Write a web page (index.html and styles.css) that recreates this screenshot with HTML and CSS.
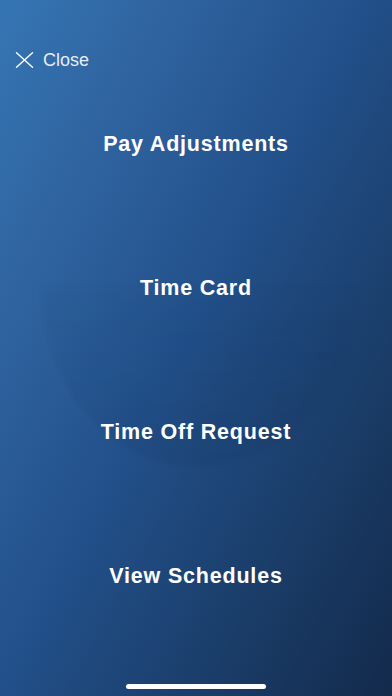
FILE: index.html
```html
<!DOCTYPE html>
<html lang="en">
<head>
<meta charset="utf-8">
<title>Menu</title>
<link rel="stylesheet" href="styles.css">
</head>
<body>
<div class="screen">
  <div class="watermark"></div>
  <header class="topbar">
    <button class="close-btn" type="button">
      <svg class="close-icon" width="19" height="16" viewBox="0 0 19 16" aria-hidden="true">
        <path d="M1.5 0.8 L17.5 15.2 M17.5 0.8 L1.5 15.2" stroke="#ffffff" stroke-width="1.4" fill="none" stroke-linecap="round"/>
      </svg>
      <span class="close-label">Close</span>
    </button>
  </header>
  <nav class="menu">
    <a class="menu-item">Pay Adjustments</a>
    <a class="menu-item">Time Card</a>
    <a class="menu-item">Time Off Request</a>
    <a class="menu-item">View Schedules</a>
  </nav>
  <div class="home-bar"><span class="home-indicator"></span></div>
</div>
</body>
</html>
```
FILE: styles.css
```css
* { box-sizing: border-box; }
html, body { margin: 0; padding: 0; }
body {
  font-family: "Liberation Sans", Arial, sans-serif;
  background: #1d416f;
}
.screen {
  position: relative;
  width: 392px;
  height: 696px;
  overflow: hidden;
  background: linear-gradient(118deg, #3675b4 0%, #2c5e99 30%, #22508a 48%, #1b3f6c 72%, #132a4b 100%);
  display: flex;
  flex-direction: column;
}
.watermark {
  position: absolute;
  left: 38px;
  top: 286px;
  width: 318px;
  height: 182px;
  border-radius: 0 0 50% 50% / 0 0 100% 100%;
  background: linear-gradient(180deg, rgba(12, 34, 68, 0.02) 0%, rgba(12, 34, 68, 0.09) 100%);
  box-shadow: -2px 1px 3px rgba(255, 255, 255, 0.04);
  filter: blur(3px);
}
.topbar {
  position: relative;
  height: 72px;
  padding: 48px 0 0 15px;
}
.close-btn {
  display: flex;
  align-items: center;
  gap: 9px;
  height: 24px;
  padding: 0;
  border: 0;
  background: none;
  color: #ffffff;
  cursor: pointer;
}
.close-icon { display: block; }
.close-label {
  font-family: "Liberation Sans", Arial, sans-serif;
  font-size: 18px;
  font-weight: 400;
  color: rgba(255, 255, 255, 0.9);
}
.menu {
  position: relative;
  display: flex;
  flex-direction: column;
}
.menu-item {
  height: 144px;
  display: flex;
  align-items: center;
  justify-content: center;
  color: #ffffff;
  font-size: 21.5px;
  font-weight: 700;
  letter-spacing: 0.8px;
  text-decoration: none;
}
.home-bar {
  position: relative;
  flex: 1;
  display: flex;
  justify-content: center;
  align-items: flex-end;
  padding-bottom: 7px;
}
.home-indicator {
  width: 140px;
  height: 5px;
  border-radius: 3px;
  background: #ffffff;
}
```
